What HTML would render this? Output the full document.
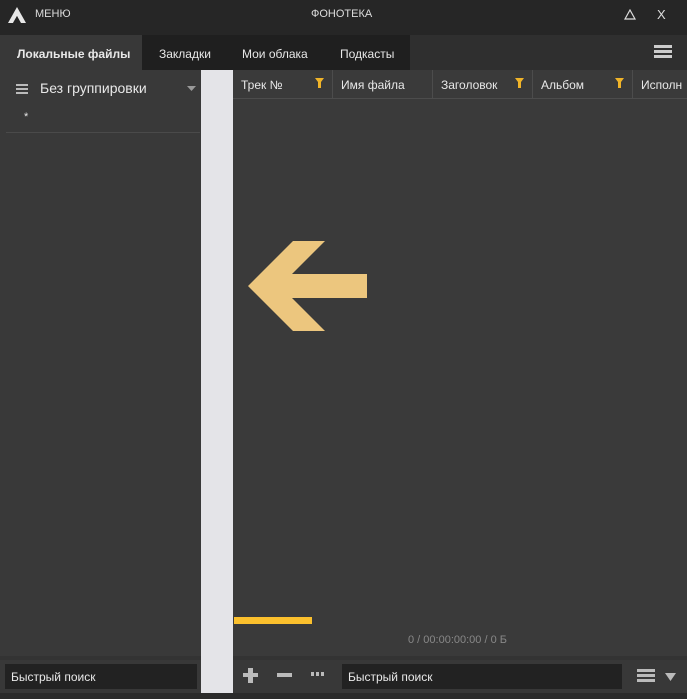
<!DOCTYPE html>
<html><head><meta charset="utf-8"><style>
*{margin:0;padding:0;box-sizing:border-box}
body{width:687px;height:699px;background:#2b2b2b;font-family:"Liberation Sans","DejaVu Sans",sans-serif;color:#e8e8e8;position:relative;overflow:hidden;font-size:12px}
.a{position:absolute}
</style></head><body>
<div class="a" style="left:0;top:0;width:687px;height:35px;background:#262626"></div>
<svg class="a" style="left:8px;top:7px" width="18" height="16"><polygon points="9,0 18,16 13,16 9,9 5,16 0,16" fill="#e8e8e8"/><polygon points="5,16 9,9 11,13" fill="#262626"/></svg>
<div class="a" style="left:35px;top:8px;font-size:11px;color:#ddd">МЕНЮ</div>
<div class="a" style="left:311px;top:8px;font-size:11px;color:#ddd">ФОНОТЕКА</div>
<svg class="a" style="left:624px;top:9px" width="12" height="11"><polygon points="6,1 11,10 1,10" fill="none" stroke="#ddd" stroke-width="1.2"/></svg>
<div class="a" style="left:657px;top:7px;font-size:13px;color:#ddd">X</div>
<div class="a" style="left:0;top:35px;width:687px;height:35px;background:#2f2f2f"></div>
<div class="a" style="left:142px;top:35px;width:268px;height:35px;background:#1f1f1f"></div>
<div class="a" style="left:0;top:35px;width:142px;height:35px;background:#383838"></div>
<div class="a" style="left:17px;top:47px;font-weight:bold;font-size:12px">Локальные файлы</div>
<div class="a" style="left:159px;top:47px">Закладки</div>
<div class="a" style="left:242px;top:47px">Мои облака</div>
<div class="a" style="left:340px;top:47px">Подкасты</div>
<div class="a" style="left:654px;top:45px;width:18px;height:3px;background:#ccc;box-shadow:0 5px 0 #ccc,0 10px 0 #ccc"></div>
<div class="a" style="left:0;top:70px;width:201px;height:590px;background:#393939"></div>
<div class="a" style="left:16px;top:84px;width:12px;height:2px;background:#bbb;box-shadow:0 4px 0 #bbb,0 8px 0 #bbb"></div>
<div class="a" style="left:40px;top:80px;font-size:14px">Без группировки</div>
<svg class="a" style="left:187px;top:86px" width="9" height="6"><polygon points="0,0 9,0 4.5,5" fill="#999"/></svg>
<div class="a" style="left:24px;top:111px;font-size:11px">*</div>
<div class="a" style="left:6px;top:132px;width:194px;height:1px;background:#4a4a4a"></div>
<div class="a" style="left:201px;top:70px;width:32px;height:623px;background:#e4e4e8"></div>
<div class="a" style="left:233px;top:70px;width:454px;height:590px;background:#3a3a3a"></div>
<div class="a" style="left:233px;top:98px;width:454px;height:1px;background:#4c4c4c"></div>
<div class="a" style="left:332px;top:70px;width:1px;height:28px;background:#4c4c4c"></div>
<div class="a" style="left:432px;top:70px;width:1px;height:28px;background:#4c4c4c"></div>
<div class="a" style="left:532px;top:70px;width:1px;height:28px;background:#4c4c4c"></div>
<div class="a" style="left:632px;top:70px;width:1px;height:28px;background:#4c4c4c"></div>
<div class="a" style="left:241px;top:78px">Трек №</div>
<div class="a" style="left:341px;top:78px">Имя файла</div>
<div class="a" style="left:441px;top:78px">Заголовок</div>
<div class="a" style="left:541px;top:78px">Альбом</div>
<div class="a" style="left:641px;top:78px">Исполн</div>
<svg class="a" style="left:315px;top:78px" width="9" height="11"><polygon points="0,0 9,0 6,4 6,10 3,10 3,4" fill="#f0b429"/></svg>
<svg class="a" style="left:515px;top:78px" width="9" height="11"><polygon points="0,0 9,0 6,4 6,10 3,10 3,4" fill="#f0b429"/></svg>
<svg class="a" style="left:615px;top:78px" width="9" height="11"><polygon points="0,0 9,0 6,4 6,10 3,10 3,4" fill="#f0b429"/></svg>
<svg class="a" style="left:0;top:0" width="687" height="699"><polygon points="248,286 293,241 325,241 292,274 367,274 367,298 292,298 325,331 293,331" fill="#ecc67e"/></svg>
<div class="a" style="left:234px;top:617px;width:78px;height:7px;background:#fbc02d"></div>
<div class="a" style="left:408px;top:634px;font-size:11px;color:#888">0 / 00:00:00:00 / 0 Б</div>
<div class="a" style="left:0;top:656px;width:201px;height:4px;background:#333"></div>
<div class="a" style="left:233px;top:656px;width:454px;height:4px;background:#333"></div>
<div class="a" style="left:0;top:660px;width:201px;height:33px;background:#383838"></div>
<div class="a" style="left:233px;top:660px;width:454px;height:33px;background:#383838"></div>
<div class="a" style="left:5px;top:664px;width:192px;height:25px;background:#222"></div>
<div class="a" style="left:11px;top:670px">Быстрый поиск</div>
<div class="a" style="left:342px;top:664px;width:280px;height:25px;background:#222"></div>
<div class="a" style="left:348px;top:670px">Быстрый поиск</div>
<div class="a" style="left:243px;top:673px;width:15px;height:4px;background:#bbb"></div>
<div class="a" style="left:248px;top:668px;width:5px;height:15px;background:#bbb"></div>
<div class="a" style="left:277px;top:673px;width:15px;height:4px;background:#bbb"></div>
<div class="a" style="left:311px;top:672px;width:3px;height:4px;background:#bbb;box-shadow:5px 0 0 #bbb,10px 0 0 #bbb"></div>
<div class="a" style="left:637px;top:669px;width:18px;height:3px;background:#bbb;box-shadow:0 5px 0 #bbb,0 10px 0 #bbb"></div>
<svg class="a" style="left:665px;top:673px" width="11" height="8"><polygon points="0,0 11,0 5.5,8" fill="#bbb"/></svg>
</body></html>
